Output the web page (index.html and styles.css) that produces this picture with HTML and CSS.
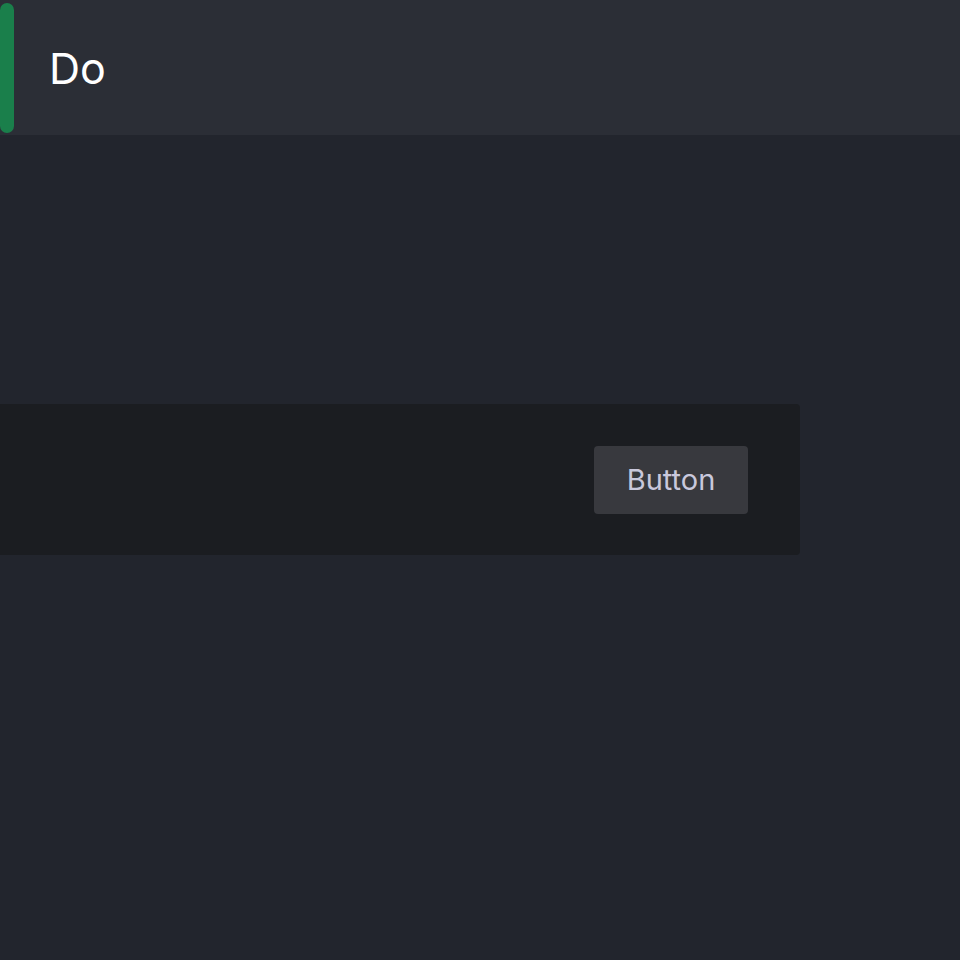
FILE: index.html
```html
<!DOCTYPE html>
<html>
<head>
<meta charset="utf-8">
<link rel="stylesheet" href="styles.css">
</head>
<body>
<header class="header">
  <div class="accent"></div>
  <h1 class="title">Do</h1>
</header>
<main class="main">
  <section class="card">
    <button class="btn">Button</button>
  </section>
</main>
</body>
</html>
```
FILE: styles.css
```css
* { box-sizing: border-box; }
html, body { margin: 0; padding: 0; }
body {
  background: #22252d;
  font-family: "Inter", sans-serif;
  width: 960px;
  height: 960px;
  overflow: hidden;
}
.header {
  height: 135px;
  background: #2b2e36;
  display: flex;
  align-items: center;
  padding: 3px 0 2px 0;
}
.accent {
  width: 14px;
  align-self: stretch;
  background: #1a7f4b;
  border-radius: 7px;
}
.title {
  margin: 0 0 0 35px;
  font-size: 43px;
  font-weight: 400;
  color: #ffffff;
  line-height: 1;
}
.main {
  padding-top: 269px;
}
.card {
  width: 1000px;
  margin-left: -200px;
  height: 151px;
  background: #1b1d21;
  border-radius: 4px;
  display: flex;
  justify-content: flex-end;
  align-items: center;
  padding: 0 52px 0 0;
}
.btn {
  width: 154px;
  height: 68px;
  background: #38393e;
  border: none;
  border-radius: 4px;
  color: #c9c8dc;
  font-family: "Inter", sans-serif;
  font-size: 29px;
  padding: 0;
}
```
